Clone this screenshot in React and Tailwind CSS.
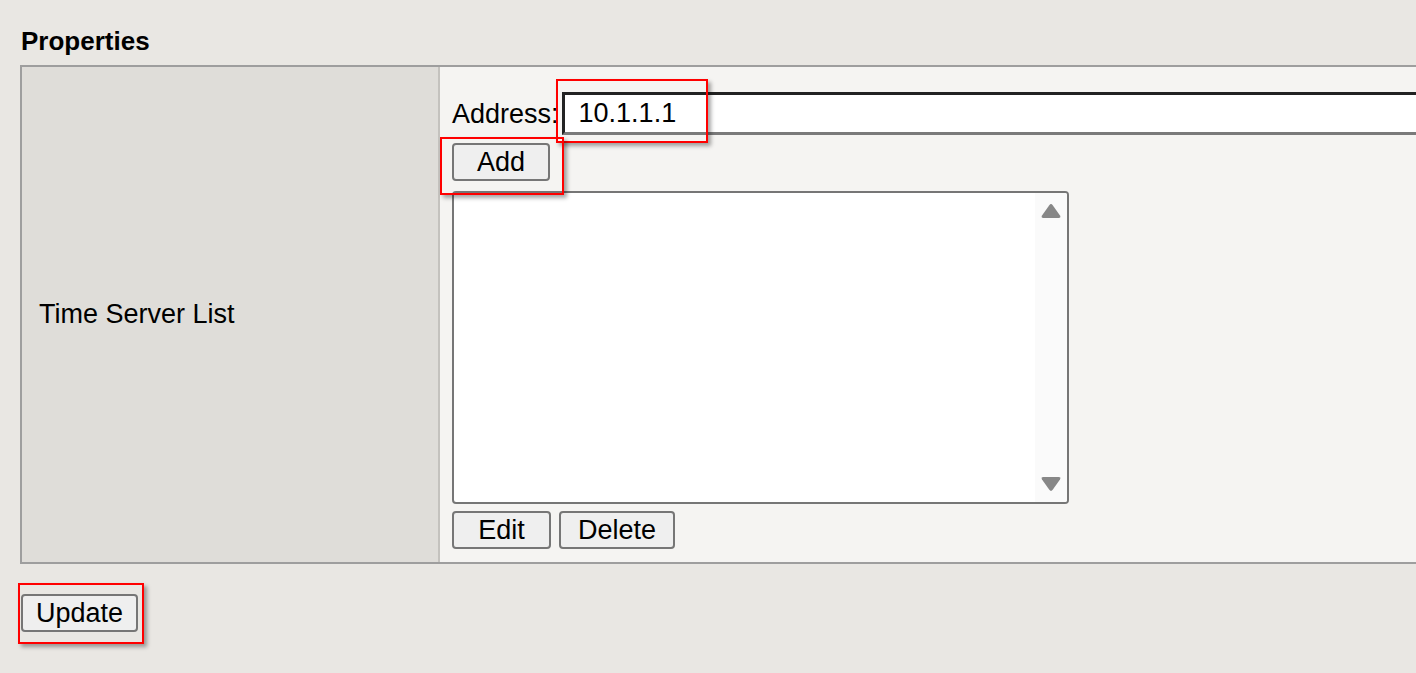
import React from "react";

function Btn({ children, className }) {
  return (
    <button
      className={
        "h-[38px] bg-[#efefef] border-2 border-[#767676] rounded-[4px] text-[27px] leading-none text-black flex items-center justify-center " +
        className
      }
    >
      {children}
    </button>
  );
}

function Mark({ className }) {
  return (
    <div
      className={
        "absolute border-2 border-[#ff0000] shadow-[3px_3px_4px_rgba(0,0,0,0.35)] pointer-events-none " +
        className
      }
    />
  );
}

export default function App() {
  return (
    <div className="relative min-h-screen w-full overflow-hidden bg-[#e9e7e3] font-['Liberation_Sans',Arial,sans-serif] text-[27px] text-black">
      <div className="pl-[21px] pt-[26px] h-[65px] text-[26px] font-bold leading-[30px]">Properties</div>

      <div className="ml-[20px] w-[1500px] h-[499px] flex border-t-2 border-l-2 border-b-2 border-[#9e9e9e]">
        <div className="w-[416px] bg-[#dfddd9] flex items-center pl-[17px]">
          Time Server List
        </div>
        <div className="w-[2px] bg-[#c4c2be]" />
        <div className="flex-1 bg-[#f5f4f2] pl-[12px] pt-[25px]">
          <div className="flex items-center h-[43px]">
            <span className="leading-none pt-[2px]">Address:</span>
            <div className="ml-[3px] flex-1 h-[43px] bg-white border-t-[3px] border-l-[3px] border-b-[3px] border-t-[#222] border-l-[#222] border-b-[#7a7a7a] flex items-center pl-[14px] leading-none">
              10.1.1.1
            </div>
          </div>
          <Btn className="mt-[8px] w-[98px] h-[37px]">Add</Btn>
          <div className="mt-[10px] w-[617px] h-[313px] bg-white border-2 border-[#767676] rounded-[4px] flex justify-end overflow-hidden">
            <div className="w-[32px] h-full bg-[#fafafa] flex flex-col items-center justify-between pt-[10px] pb-[10px]">
              <svg width="22" height="16" viewBox="0 0 22 16">
                <path d="M9.3 2.2 Q11 0 12.7 2.2 L20 12.6 Q21.3 15 18.6 15 L3.4 15 Q0.7 15 2 12.6 Z" fill="#878787" />
              </svg>
              <svg width="22" height="16" viewBox="0 0 22 16">
                <path d="M9.3 13.8 Q11 16 12.7 13.8 L20 3.4 Q21.3 1 18.6 1 L3.4 1 Q0.7 1 2 3.4 Z" fill="#878787" />
              </svg>
            </div>
          </div>
          <div className="mt-[7px] flex gap-[8px]">
            <Btn className="w-[99px]">Edit</Btn>
            <Btn className="w-[116px]">Delete</Btn>
          </div>
        </div>
      </div>

      <Btn className="ml-[21px] mt-[30px] w-[117px] h-[37px]">Update</Btn>

      <Mark className="left-[556px] top-[79px] w-[152px] h-[64px]" />
      <Mark className="left-[440px] top-[137px] w-[124px] h-[58px]" />
      <Mark className="left-[18px] top-[583px] w-[126px] h-[61px]" />
    </div>
  );
}
